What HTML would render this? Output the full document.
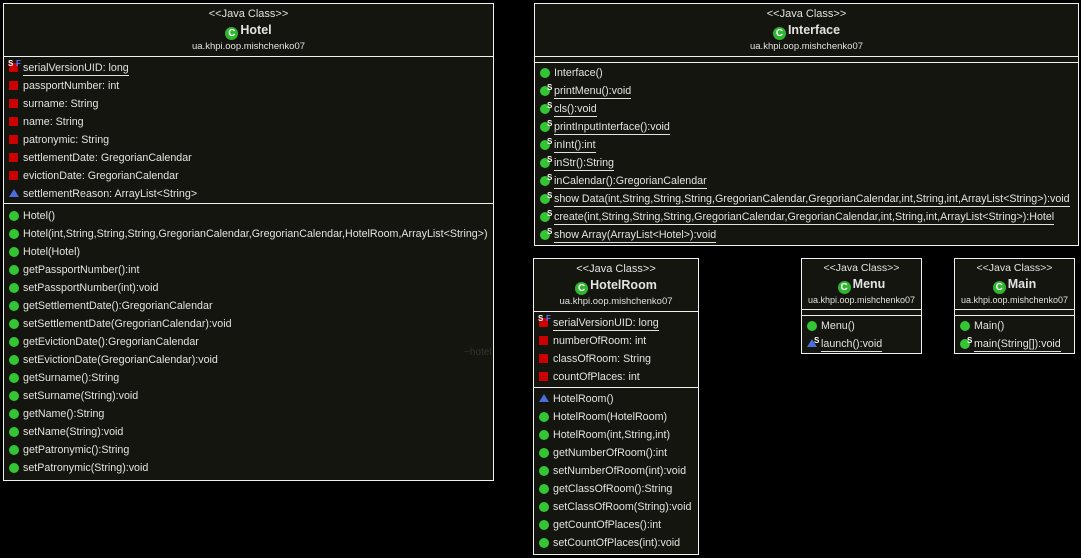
<!DOCTYPE html>
<html><head><meta charset="utf-8"><style>
body{margin:0;width:1081px;height:558px;background:#000;position:relative;overflow:hidden;font-family:"Liberation Sans",Arial,sans-serif;color:#e2e2e2}
.box{position:absolute;background:#15150f;border:1px solid #f0f0f0;box-sizing:border-box}
.sep{position:absolute;left:0;right:0;height:1px;background:#f0f0f0}
.c{position:absolute;left:0;right:0;text-align:center;font-size:11px;white-space:nowrap}
.st{font-size:11px}
.nm{font-size:12.5px;font-weight:bold}
.pk{font-size:9.5px}
.r{position:absolute;font-size:10.7px;white-space:nowrap;line-height:14px;height:14px}
.r span.t{position:absolute;left:14px}
.u{border-bottom:1px solid #e2e2e2}
.ic{position:absolute;top:2px;left:0}
.g{width:10px;height:10px;border-radius:50%;background:#33c533;top:2px}
.sq{width:9px;height:9px;background:#c00;top:2px}
.tri{width:0;height:0;border-left:5px solid transparent;border-right:5px solid transparent;border-bottom:8px solid #4a6ee0;top:2px}
.s{position:absolute;left:7px;top:-3px;font-size:8px;font-weight:bold;color:#fff}
.f{position:absolute;left:7px;top:-4px;font-size:8px;font-weight:bold;color:#5577ff}
.cc{display:inline-block;width:13px;height:13px;border-radius:50%;background:#2fb52f;color:#fff;font-size:10px;font-weight:bold;line-height:13px;text-align:center;vertical-align:-2px;margin-right:2px}
</style></head><body>

<!-- Hotel -->
<div class="box" style="left:3px;top:3px;width:491px;height:478px">
<div class="c st" style="top:4px">&lt;&lt;Java Class&gt;&gt;</div>
<div class="c nm" style="top:19px"><span class="cc">C</span>Hotel</div>
<div class="c pk" style="top:37px">ua.khpi.oop.mishchenko07</div>
<div class="sep" style="top:52px"></div>
<div class="r" style="left:5px;top:57px"><i class="ic sq"></i><b class="s" style="left:-1px;top:-4px">S</b><b class="f">F</b><span class="t u">serialVersionUID: long</span></div>
<div class="r" style="left:5px;top:75px"><i class="ic sq"></i><span class="t">passportNumber: int</span></div>
<div class="r" style="left:5px;top:93px"><i class="ic sq"></i><span class="t">surname: String</span></div>
<div class="r" style="left:5px;top:111px"><i class="ic sq"></i><span class="t">name: String</span></div>
<div class="r" style="left:5px;top:129px"><i class="ic sq"></i><span class="t">patronymic: String</span></div>
<div class="r" style="left:5px;top:147px"><i class="ic sq"></i><span class="t">settlementDate: GregorianCalendar</span></div>
<div class="r" style="left:5px;top:165px"><i class="ic sq"></i><span class="t">evictionDate: GregorianCalendar</span></div>
<div class="r" style="left:5px;top:183px"><i class="ic tri"></i><span class="t">settlementReason: ArrayList&lt;String&gt;</span></div>
<div class="sep" style="top:199px"></div>
<div class="r" style="left:5px;top:205px"><i class="ic g"></i><span class="t">Hotel()</span></div>
<div class="r" style="left:5px;top:223px"><i class="ic g"></i><span class="t">Hotel(int,String,String,String,GregorianCalendar,GregorianCalendar,HotelRoom,ArrayList&lt;String&gt;)</span></div>
<div class="r" style="left:5px;top:241px"><i class="ic g"></i><span class="t">Hotel(Hotel)</span></div>
<div class="r" style="left:5px;top:259px"><i class="ic g"></i><span class="t">getPassportNumber():int</span></div>
<div class="r" style="left:5px;top:277px"><i class="ic g"></i><span class="t">setPassportNumber(int):void</span></div>
<div class="r" style="left:5px;top:295px"><i class="ic g"></i><span class="t">getSettlementDate():GregorianCalendar</span></div>
<div class="r" style="left:5px;top:313px"><i class="ic g"></i><span class="t">setSettlementDate(GregorianCalendar):void</span></div>
<div class="r" style="left:5px;top:331px"><i class="ic g"></i><span class="t">getEvictionDate():GregorianCalendar</span></div>
<div class="r" style="left:5px;top:349px"><i class="ic g"></i><span class="t">setEvictionDate(GregorianCalendar):void</span></div>
<div class="r" style="left:5px;top:367px"><i class="ic g"></i><span class="t">getSurname():String</span></div>
<div class="r" style="left:5px;top:385px"><i class="ic g"></i><span class="t">setSurname(String):void</span></div>
<div class="r" style="left:5px;top:403px"><i class="ic g"></i><span class="t">getName():String</span></div>
<div class="r" style="left:5px;top:421px"><i class="ic g"></i><span class="t">setName(String):void</span></div>
<div class="r" style="left:5px;top:439px"><i class="ic g"></i><span class="t">getPatronymic():String</span></div>
<div class="r" style="left:5px;top:457px"><i class="ic g"></i><span class="t">setPatronymic(String):void</span></div>
<div class="r" style="left:460px;top:342px;color:#333;font-size:10px">~hotel</div>
</div>

<!-- Interface -->
<div class="box" style="left:534px;top:3px;width:545px;height:243px">
<div class="c st" style="top:4px">&lt;&lt;Java Class&gt;&gt;</div>
<div class="c nm" style="top:19px"><span class="cc">C</span>Interface</div>
<div class="c pk" style="top:37px">ua.khpi.oop.mishchenko07</div>
<div class="sep" style="top:52px"></div>
<div class="sep" style="top:58px"></div>
<div class="r" style="left:5px;top:62px"><i class="ic g"></i><span class="t">Interface()</span></div>
<div class="r" style="left:5px;top:80px"><i class="ic g"></i><b class="s">S</b><span class="t u">printMenu():void</span></div>
<div class="r" style="left:5px;top:98px"><i class="ic g"></i><b class="s">S</b><span class="t u">cls():void</span></div>
<div class="r" style="left:5px;top:116px"><i class="ic g"></i><b class="s">S</b><span class="t u">printInputInterface():void</span></div>
<div class="r" style="left:5px;top:134px"><i class="ic g"></i><b class="s">S</b><span class="t u">inInt():int</span></div>
<div class="r" style="left:5px;top:152px"><i class="ic g"></i><b class="s">S</b><span class="t u">inStr():String</span></div>
<div class="r" style="left:5px;top:170px"><i class="ic g"></i><b class="s">S</b><span class="t u">inCalendar():GregorianCalendar</span></div>
<div class="r" style="left:5px;top:188px"><i class="ic g"></i><b class="s">S</b><span class="t u">show Data(int,String,String,String,GregorianCalendar,GregorianCalendar,int,String,int,ArrayList&lt;String&gt;):void</span></div>
<div class="r" style="left:5px;top:206px"><i class="ic g"></i><b class="s">S</b><span class="t u">create(int,String,String,String,GregorianCalendar,GregorianCalendar,int,String,int,ArrayList&lt;String&gt;):Hotel</span></div>
<div class="r" style="left:5px;top:224px"><i class="ic g"></i><b class="s">S</b><span class="t u">show Array(ArrayList&lt;Hotel&gt;):void</span></div>
</div>

<!-- HotelRoom -->
<div class="box" style="left:533px;top:258px;width:166px;height:297px">
<div class="c st" style="top:4px">&lt;&lt;Java Class&gt;&gt;</div>
<div class="c nm" style="top:19px"><span class="cc">C</span>HotelRoom</div>
<div class="c pk" style="top:37px">ua.khpi.oop.mishchenko07</div>
<div class="sep" style="top:52px"></div>
<div class="r" style="left:5px;top:57px"><i class="ic sq"></i><b class="s" style="left:-1px;top:-4px">S</b><b class="f">F</b><span class="t u">serialVersionUID: long</span></div>
<div class="r" style="left:5px;top:75px"><i class="ic sq"></i><span class="t">numberOfRoom: int</span></div>
<div class="r" style="left:5px;top:93px"><i class="ic sq"></i><span class="t">classOfRoom: String</span></div>
<div class="r" style="left:5px;top:111px"><i class="ic sq"></i><span class="t">countOfPlaces: int</span></div>
<div class="sep" style="top:128px"></div>
<div class="r" style="left:5px;top:133px"><i class="ic tri"></i><span class="t">HotelRoom()</span></div>
<div class="r" style="left:5px;top:151px"><i class="ic g"></i><span class="t">HotelRoom(HotelRoom)</span></div>
<div class="r" style="left:5px;top:169px"><i class="ic g"></i><span class="t">HotelRoom(int,String,int)</span></div>
<div class="r" style="left:5px;top:187px"><i class="ic g"></i><span class="t">getNumberOfRoom():int</span></div>
<div class="r" style="left:5px;top:205px"><i class="ic g"></i><span class="t">setNumberOfRoom(int):void</span></div>
<div class="r" style="left:5px;top:223px"><i class="ic g"></i><span class="t">getClassOfRoom():String</span></div>
<div class="r" style="left:5px;top:241px"><i class="ic g"></i><span class="t">setClassOfRoom(String):void</span></div>
<div class="r" style="left:5px;top:259px"><i class="ic g"></i><span class="t">getCountOfPlaces():int</span></div>
<div class="r" style="left:5px;top:277px"><i class="ic g"></i><span class="t">setCountOfPlaces(int):void</span></div>
</div>

<!-- Menu -->
<div class="box" style="left:801px;top:258px;width:121px;height:96px">
<div class="c st" style="top:3px;font-size:10.5px">&lt;&lt;Java Class&gt;&gt;</div>
<div class="c nm" style="top:18px"><span class="cc">C</span>Menu</div>
<div class="c pk" style="top:36px;font-size:9px">ua.khpi.oop.mishchenko07</div>
<div class="sep" style="top:50px"></div>
<div class="sep" style="top:56px"></div>
<div class="r" style="left:5px;top:60px"><i class="ic g"></i><span class="t">Menu()</span></div>
<div class="r" style="left:5px;top:78px"><i class="ic tri"></i><b class="s">S</b><span class="t u">launch():void</span></div>
</div>

<!-- Main -->
<div class="box" style="left:954px;top:258px;width:121px;height:96px">
<div class="c st" style="top:3px;font-size:10.5px">&lt;&lt;Java Class&gt;&gt;</div>
<div class="c nm" style="top:18px"><span class="cc">C</span>Main</div>
<div class="c pk" style="top:36px;font-size:9px">ua.khpi.oop.mishchenko07</div>
<div class="sep" style="top:50px"></div>
<div class="sep" style="top:56px"></div>
<div class="r" style="left:5px;top:60px"><i class="ic g"></i><span class="t">Main()</span></div>
<div class="r" style="left:5px;top:78px"><i class="ic g"></i><b class="s">S</b><span class="t u">main(String[]):void</span></div>
</div>
</body></html>
